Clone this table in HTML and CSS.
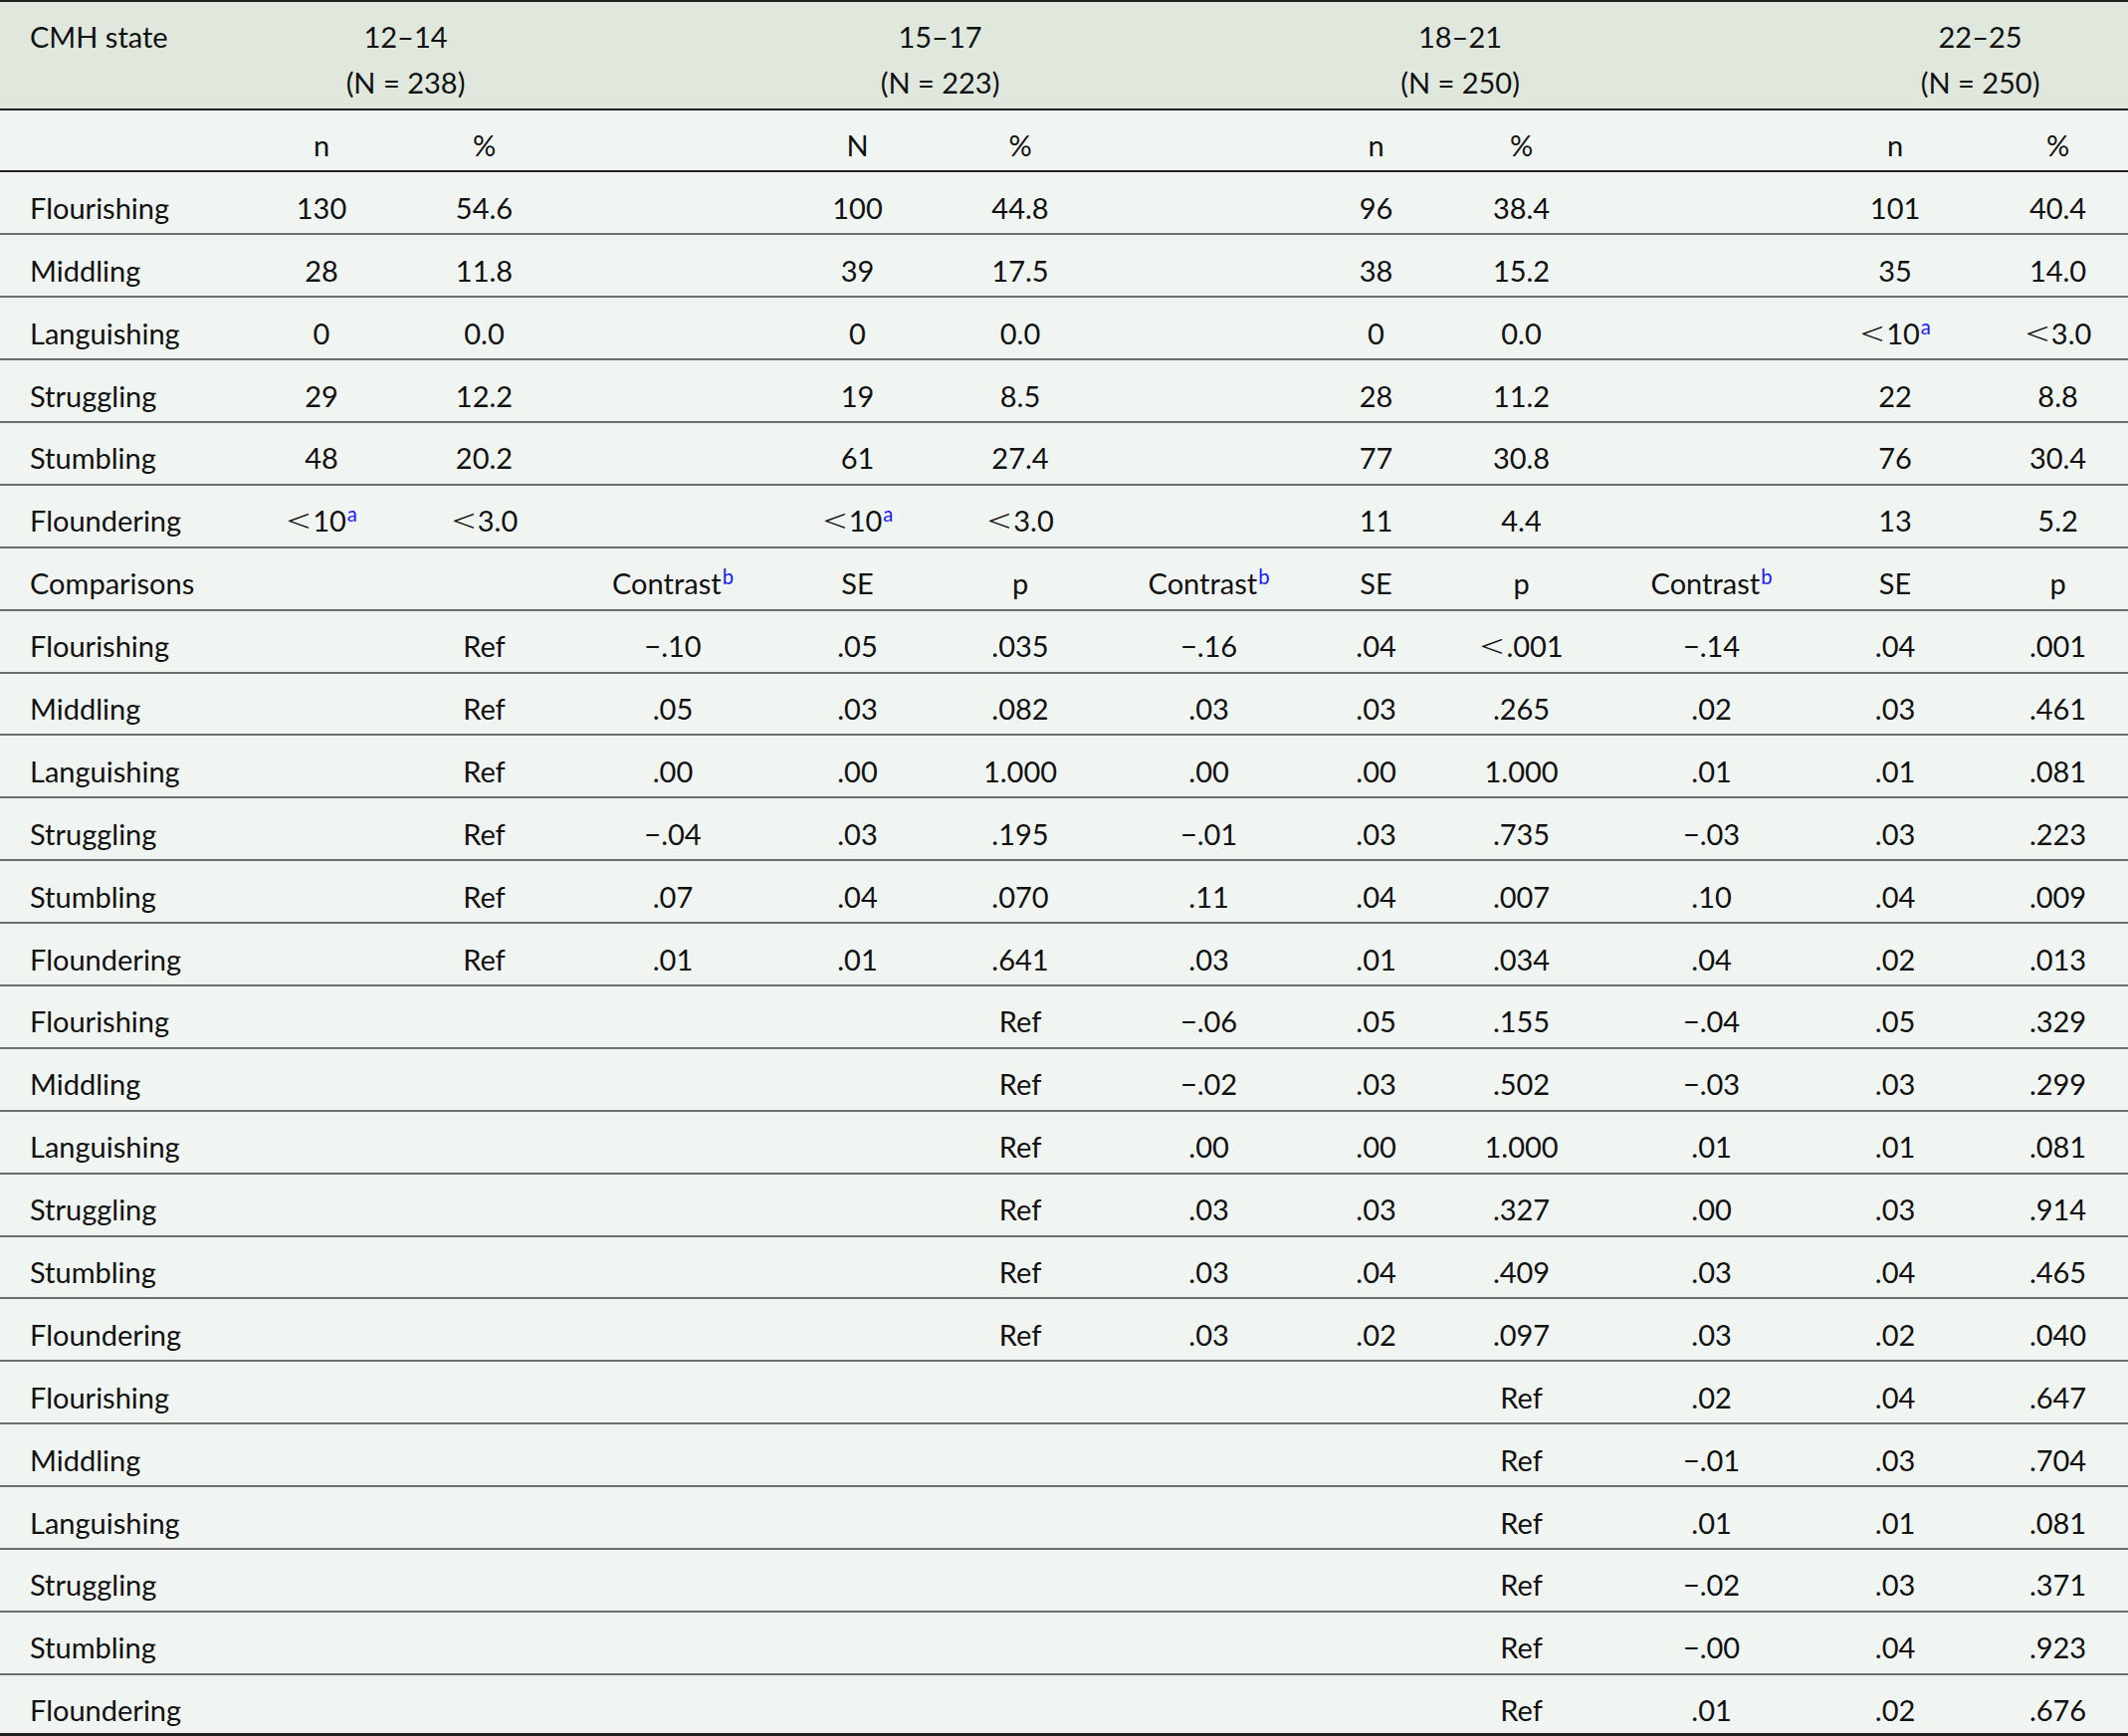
FILE: index.html
```html
<!DOCTYPE html>
<html lang="en">
<head>
<meta charset="utf-8">
<title>CMH state table</title>
<link rel="stylesheet" href="styles.css">
</head>
<body>
<table class="cmh">
  <colgroup>
    <col class="w1"><col class="w2"><col class="w3"><col class="w4"><col class="w5"><col class="w6">
    <col class="w7"><col class="w8"><col class="w9"><col class="w10"><col class="w11"><col class="w12">
  </colgroup>
  <thead>
    <tr class="hd">
      <th class="lbl">CMH state</th>
      <th colspan="2">12–14<br>(N = 238)</th>
      <th></th>
      <th colspan="2">15–17<br>(N = 223)</th>
      <th></th>
      <th colspan="2">18–21<br>(N = 250)</th>
      <th></th>
      <th colspan="2">22–25<br>(N = 250)</th>
    </tr>
  </thead>
  <tbody>
    <tr class="sub"><td class="lbl"></td><td>n</td><td>%</td><td></td><td>N</td><td>%</td><td></td><td>n</td><td>%</td><td></td><td>n</td><td>%</td></tr>
    <tr><td class="lbl">Flourishing</td><td>130</td><td>54.6</td><td></td><td>100</td><td>44.8</td><td></td><td>96</td><td>38.4</td><td></td><td>101</td><td>40.4</td></tr>
    <tr><td class="lbl">Middling</td><td>28</td><td>11.8</td><td></td><td>39</td><td>17.5</td><td></td><td>38</td><td>15.2</td><td></td><td>35</td><td>14.0</td></tr>
    <tr><td class="lbl">Languishing</td><td>0</td><td>0.0</td><td></td><td>0</td><td>0.0</td><td></td><td>0</td><td>0.0</td><td></td><td><span class="lt">&lt;</span>10<sup class="fn">a</sup></td><td><span class="lt">&lt;</span>3.0</td></tr>
    <tr><td class="lbl">Struggling</td><td>29</td><td>12.2</td><td></td><td>19</td><td>8.5</td><td></td><td>28</td><td>11.2</td><td></td><td>22</td><td>8.8</td></tr>
    <tr><td class="lbl">Stumbling</td><td>48</td><td>20.2</td><td></td><td>61</td><td>27.4</td><td></td><td>77</td><td>30.8</td><td></td><td>76</td><td>30.4</td></tr>
    <tr><td class="lbl">Floundering</td><td><span class="lt">&lt;</span>10<sup class="fn">a</sup></td><td><span class="lt">&lt;</span>3.0</td><td></td><td><span class="lt">&lt;</span>10<sup class="fn">a</sup></td><td><span class="lt">&lt;</span>3.0</td><td></td><td>11</td><td>4.4</td><td></td><td>13</td><td>5.2</td></tr>
    <tr><td class="lbl">Comparisons</td><td></td><td></td><td>Contrast<sup class="fn">b</sup></td><td>SE</td><td>p</td><td>Contrast<sup class="fn">b</sup></td><td>SE</td><td>p</td><td>Contrast<sup class="fn">b</sup></td><td>SE</td><td>p</td></tr>

    <tr><td class="lbl">Flourishing</td><td></td><td>Ref</td><td>−.10</td><td>.05</td><td>.035</td><td>−.16</td><td>.04</td><td><span class="lt">&lt;</span>.001</td><td>−.14</td><td>.04</td><td>.001</td></tr>
    <tr><td class="lbl">Middling</td><td></td><td>Ref</td><td>.05</td><td>.03</td><td>.082</td><td>.03</td><td>.03</td><td>.265</td><td>.02</td><td>.03</td><td>.461</td></tr>
    <tr><td class="lbl">Languishing</td><td></td><td>Ref</td><td>.00</td><td>.00</td><td>1.000</td><td>.00</td><td>.00</td><td>1.000</td><td>.01</td><td>.01</td><td>.081</td></tr>
    <tr><td class="lbl">Struggling</td><td></td><td>Ref</td><td>−.04</td><td>.03</td><td>.195</td><td>−.01</td><td>.03</td><td>.735</td><td>−.03</td><td>.03</td><td>.223</td></tr>
    <tr><td class="lbl">Stumbling</td><td></td><td>Ref</td><td>.07</td><td>.04</td><td>.070</td><td>.11</td><td>.04</td><td>.007</td><td>.10</td><td>.04</td><td>.009</td></tr>
    <tr><td class="lbl">Floundering</td><td></td><td>Ref</td><td>.01</td><td>.01</td><td>.641</td><td>.03</td><td>.01</td><td>.034</td><td>.04</td><td>.02</td><td>.013</td></tr>

    <tr><td class="lbl">Flourishing</td><td></td><td></td><td></td><td></td><td>Ref</td><td>−.06</td><td>.05</td><td>.155</td><td>−.04</td><td>.05</td><td>.329</td></tr>
    <tr><td class="lbl">Middling</td><td></td><td></td><td></td><td></td><td>Ref</td><td>−.02</td><td>.03</td><td>.502</td><td>−.03</td><td>.03</td><td>.299</td></tr>
    <tr><td class="lbl">Languishing</td><td></td><td></td><td></td><td></td><td>Ref</td><td>.00</td><td>.00</td><td>1.000</td><td>.01</td><td>.01</td><td>.081</td></tr>
    <tr><td class="lbl">Struggling</td><td></td><td></td><td></td><td></td><td>Ref</td><td>.03</td><td>.03</td><td>.327</td><td>.00</td><td>.03</td><td>.914</td></tr>
    <tr><td class="lbl">Stumbling</td><td></td><td></td><td></td><td></td><td>Ref</td><td>.03</td><td>.04</td><td>.409</td><td>.03</td><td>.04</td><td>.465</td></tr>
    <tr><td class="lbl">Floundering</td><td></td><td></td><td></td><td></td><td>Ref</td><td>.03</td><td>.02</td><td>.097</td><td>.03</td><td>.02</td><td>.040</td></tr>

    <tr><td class="lbl">Flourishing</td><td></td><td></td><td></td><td></td><td></td><td></td><td></td><td>Ref</td><td>.02</td><td>.04</td><td>.647</td></tr>
    <tr><td class="lbl">Middling</td><td></td><td></td><td></td><td></td><td></td><td></td><td></td><td>Ref</td><td>−.01</td><td>.03</td><td>.704</td></tr>
    <tr><td class="lbl">Languishing</td><td></td><td></td><td></td><td></td><td></td><td></td><td></td><td>Ref</td><td>.01</td><td>.01</td><td>.081</td></tr>
    <tr><td class="lbl">Struggling</td><td></td><td></td><td></td><td></td><td></td><td></td><td></td><td>Ref</td><td>−.02</td><td>.03</td><td>.371</td></tr>
    <tr><td class="lbl">Stumbling</td><td></td><td></td><td></td><td></td><td></td><td></td><td></td><td>Ref</td><td>−.00</td><td>.04</td><td>.923</td></tr>
    <tr class="last"><td class="lbl">Floundering</td><td></td><td></td><td></td><td></td><td></td><td></td><td></td><td>Ref</td><td>.01</td><td>.02</td><td>.676</td></tr>
  </tbody>
</table>
</body>
</html>
```

FILE: styles.css
```css
html {
  overflow: hidden;
  background: #f1f5f1;
}
body {
  margin: 0;
  background: #f1f5f1;
  font-family: Lato, "Noto Sans", sans-serif;
  font-size: 29px;
  color: #111;
}
.cmh {
  width: 2153px;
  table-layout: fixed;
  border-collapse: separate;
  border-spacing: 0;
  border-top: 2px solid #222;
  border-bottom: 3px solid #222;
  background: #f1f5f1;
}
.w1 { width: 244px; }
.w2 { width: 158px; }
.w3 { width: 169px; }
.w4 { width: 210px; }
.w5 { width: 161px; }
.w6 { width: 166px; }
.w7 { width: 213px; }
.w8 { width: 123px; }
.w9 { width: 169px; }
.w10 { width: 213px; }
.w11 { width: 156px; }
.w12 { width: 171px; }

.hd {
  height: 108.5px;
  background: #e0e8de;
}
.hd th {
  font-weight: normal;
  vertical-align: top;
  text-align: center;
  padding: 12px 0 0 0;
  line-height: 46px;
  border-bottom: 2px solid #222;
}
tbody tr {
  height: 62.9px;
}
tbody tr.last {
  height: 58.5px;
}
tbody td {
  padding: 15.5px 0 0 0;
  text-align: center;
  vertical-align: top;
  line-height: 40px;
  border-bottom: 2px solid #6e6e6e;
  white-space: nowrap;
}
tbody tr.sub td {
  border-bottom-color: #222;
}
tbody tr.last td {
  border-bottom: none;
}
.cmh .lbl {
  text-align: left;
  padding-left: 30px;
}
.fn {
  color: #1a1aff;
  font-size: 0.7em;
  vertical-align: 0.5em;
  line-height: 0;
  margin-left: 1px;
}
.lt {
  display: inline-block;
  font-family: "Liberation Serif", serif;
  font-size: 1.1em;
  line-height: 0;
  transform: scaleX(1.35);
  margin: 0 5px 0 4px;
}
```
